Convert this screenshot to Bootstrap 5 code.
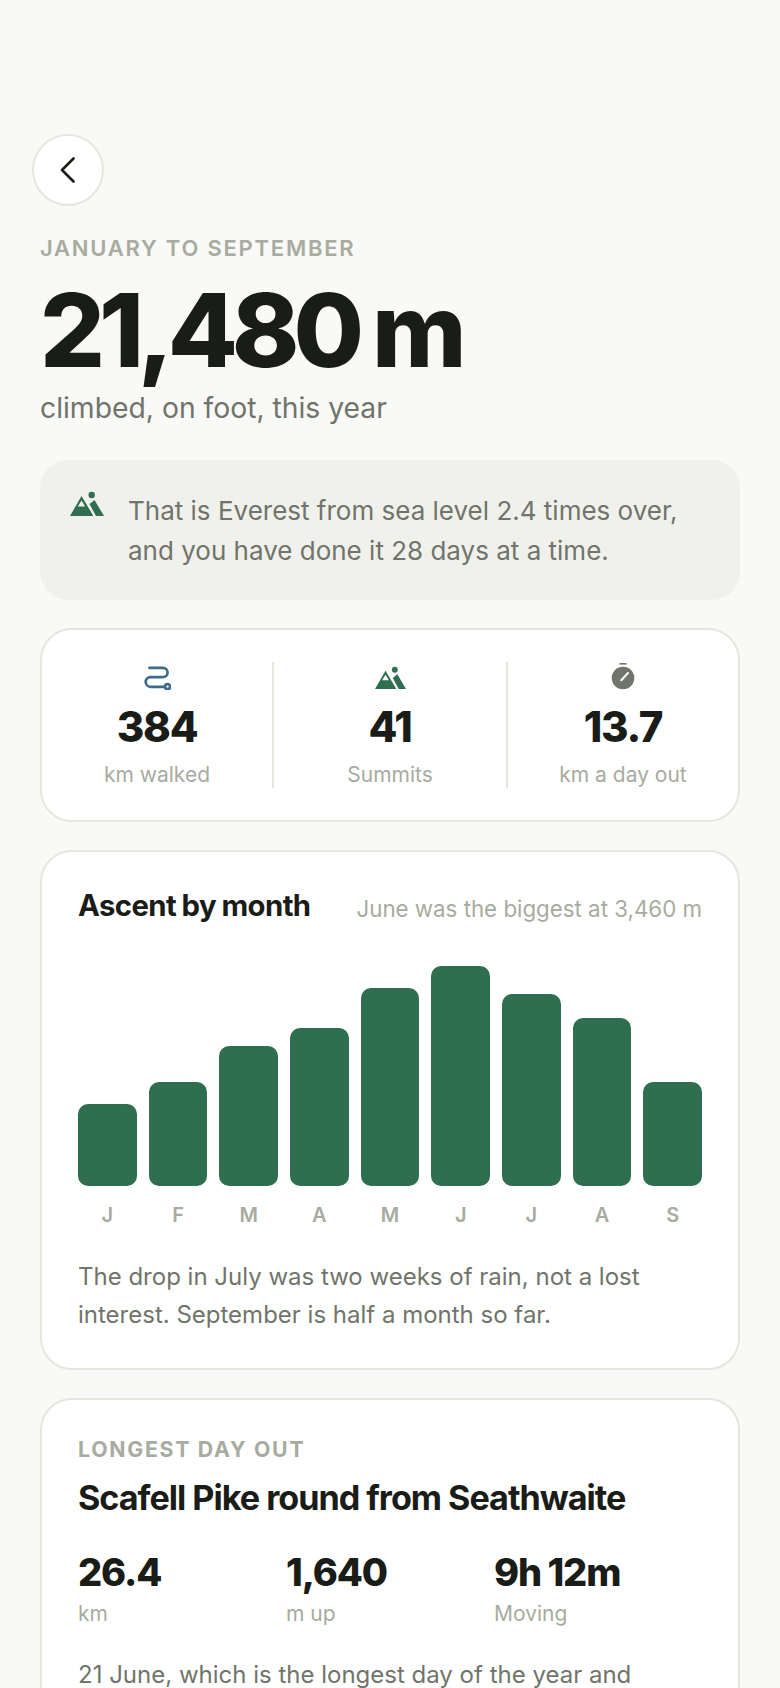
<!DOCTYPE html>
<html lang="en">
<head>
<meta charset="utf-8">
<title>Ascent</title>
<link href="https://cdn.jsdelivr.net/npm/bootstrap@5.3.0/dist/css/bootstrap.min.css" rel="stylesheet">
<style>
html,body{height:1688px;overflow:hidden}
body{background:#f9f9f7;font-family:Inter,"Liberation Sans",sans-serif;color:#1a1c18}
.pg{padding:134px 40px 0}
.backbtn{width:72px;height:72px;margin-left:-8px;background:#fff;border:2px solid #e6e6df;border-radius:50%}
.eyebrow{font-size:22px;line-height:28px;font-weight:600;letter-spacing:.08em;color:#a8aba0;margin-top:28px}
.hero{font-size:102px;line-height:104px;font-weight:800;letter-spacing:-.06em;word-spacing:-.02em;margin:16px 0 0}
.sub{font-size:28.300px;line-height:36px;color:#71746a;margin-top:8px}
.callout{background:#f0f1ec;border-radius:28px;padding:31px 30px 29px;gap:24px;margin-top:34px;font-size:26px;line-height:40px;color:#71746a}
.sheet{background:#fff;border:2px solid #e6e6df;border-radius:32px;margin-top:28px}
.statrow{padding:32px 0}
.statcol{height:126px}
.statcol-first{border-right:2px solid #e6e6df}
.statcol-last{border-left:2px solid #e6e6df}
.statnum{font-size:42px;line-height:50px;font-weight:800;letter-spacing:-.03em;margin-top:10px}
.statlab{font-size:21px;line-height:28px;color:#a8aba0;margin-top:9px}
.icobox{height:30px}
.chartcard{padding:36px 36px 34px}
.charttitle{font-size:29.300px;line-height:36px;font-weight:700;letter-spacing:-.02em;word-spacing:-.03em;margin:0}
.chartnote{font-size:22.300px;line-height:30px;color:#a8aba0;margin-top:6px}
.bars{height:220px;gap:12px;margin-top:42px}
.barcell{flex:1 1 0;background:#2f6f4f;border-radius:10px}
.months{gap:12px;margin-top:15px}
.mon{flex:1 1 0;text-align:center;font-size:20px;line-height:28px;font-weight:600;color:#a8aba0}
.para{font-size:24px;line-height:38px;color:#71746a}
.parafirst{margin-top:29px}
.daycard{padding:36px 36px 36px}
.dayeyebrow{font-size:21.300px;line-height:26px;font-weight:700;letter-spacing:.08em;color:#a8aba0}
.daytitle{font-size:34.200px;line-height:42px;font-weight:700;letter-spacing:-.03em;margin:15px 0 0}
.dayrow{margin-top:30px}
.dayval{font-size:38px;line-height:46px;font-weight:800;letter-spacing:-.03em;word-spacing:-.02em}
.daylab{font-size:21px;line-height:28px;color:#a8aba0;margin-top:5px}
.daypara{margin-top:28px}
</style>
</head>
<body>
<main class="pg">
  <a href="#" class="backbtn d-flex align-items-center justify-content-center" aria-label="Back">
    <svg width="16" height="26" viewBox="0 0 16 26" fill="none" stroke="#1a1c18" stroke-width="2.6" stroke-linecap="round" stroke-linejoin="round"><path d="M13.5 1.5 2 13l11.5 11.5"/></svg>
  </a>
  <div class="eyebrow">JANUARY TO SEPTEMBER</div>
  <h1 class="hero">21,480 m</h1>
  <div class="sub">climbed, on foot, this year</div>

  <section class="callout d-flex align-items-start">
    <svg class="flex-shrink-0" width="34" height="25" viewBox="0 0 34 25"><path fill="#2f6f4f" d="M0 25 11.500 5 23.500 25Z"/><path fill="#2f6f4f" d="M19.500 13l5-4L34 25H26Z"/><circle cx="21.700" cy="4" r="3.200" fill="#2f6f4f"/><path fill="#f0f1ec" d="M11.500 9.500 7.800 15.500h7.400Z"/><path stroke="#f0f1ec" stroke-width="1.600" d="M17.500 12.500 24.500 25"/></svg>
    <div>That is Everest from sea level 2.4 times over, and you have done it 28 days at a time.</div>
  </section>

  <section class="card sheet">
    <div class="row g-0 statrow">
      <div class="col-4 statcol statcol-first text-center">
        <div class="icobox d-flex justify-content-center align-items-center">
          <svg width="28" height="26" viewBox="0 0 26 24" fill="none" stroke="#3d6b8f" stroke-width="2.500" stroke-linecap="round"><path d="M6 3.500h12.500a4.300 4.300 0 0 1 0 8.600H7a4.500 4.500 0 0 0 0 9h13"/><circle cx="22.800" cy="21" r="2.300" fill="#fff"/></svg>
        </div>
        <div class="statnum">384</div>
        <div class="statlab">km walked</div>
      </div>
      <div class="col-4 statcol text-center">
        <div class="icobox d-flex justify-content-center align-items-center">
          <svg width="31" height="23" viewBox="0 0 34 25"><path fill="#2f6f4f" d="M0 25 11.500 5 23.500 25Z"/><path fill="#2f6f4f" d="M19.500 13l5-4L34 25H26Z"/><circle cx="21.700" cy="4" r="3.200" fill="#2f6f4f"/><path fill="#fff" d="M11.500 9.500 7.800 15.500h7.400Z"/><path stroke="#fff" stroke-width="1.600" d="M17.500 12.500 24.500 25"/></svg>
        </div>
        <div class="statnum">41</div>
        <div class="statlab">Summits</div>
      </div>
      <div class="col-4 statcol statcol-last text-center">
        <div class="icobox d-flex justify-content-center align-items-center">
          <svg width="24" height="28" viewBox="0 0 24 28"><rect x="8.500" y="0" width="7" height="1.600" fill="#71746a"/><circle cx="12" cy="15" r="11.300" fill="#71746a"/><path d="M10.300 17.300 17 10" stroke="#fff" stroke-width="2" stroke-linecap="round"/></svg>
        </div>
        <div class="statnum">13.7</div>
        <div class="statlab">km a day out</div>
      </div>
    </div>
  </section>

  <section class="card sheet chartcard">
    <div class="d-flex justify-content-between align-items-center">
      <h2 class="charttitle">Ascent by month</h2>
      <div class="chartnote">June was the biggest at 3,460 m</div>
    </div>
    <div class="bars d-flex align-items-end">
      <div class="barcell" style="height:82px"></div>
      <div class="barcell" style="height:104px"></div>
      <div class="barcell" style="height:140px"></div>
      <div class="barcell" style="height:158px"></div>
      <div class="barcell" style="height:198px"></div>
      <div class="barcell" style="height:220px"></div>
      <div class="barcell" style="height:192px"></div>
      <div class="barcell" style="height:168px"></div>
      <div class="barcell" style="height:104px"></div>
    </div>
    <div class="months d-flex">
      <div class="mon">J</div><div class="mon">F</div><div class="mon">M</div><div class="mon">A</div><div class="mon">M</div><div class="mon">J</div><div class="mon">J</div><div class="mon">A</div><div class="mon">S</div>
    </div>
    <p class="para parafirst mb-0">The drop in July was two weeks of rain, not a lost interest. September is half a month so far.</p>
  </section>

  <section class="card sheet daycard">
    <div class="dayeyebrow">LONGEST DAY OUT</div>
    <h2 class="daytitle">Scafell Pike round from Seathwaite</h2>
    <div class="row g-0 dayrow">
      <div class="col-4"><div class="dayval">26.4</div><div class="daylab">km</div></div>
      <div class="col-4"><div class="dayval">1,640</div><div class="daylab">m up</div></div>
      <div class="col-4"><div class="dayval">9h 12m</div><div class="daylab">Moving</div></div>
    </div>
    <p class="para daypara mb-0">21 June, which is the longest day of the year and</p>
  </section>
</main>
</body>
</html>
